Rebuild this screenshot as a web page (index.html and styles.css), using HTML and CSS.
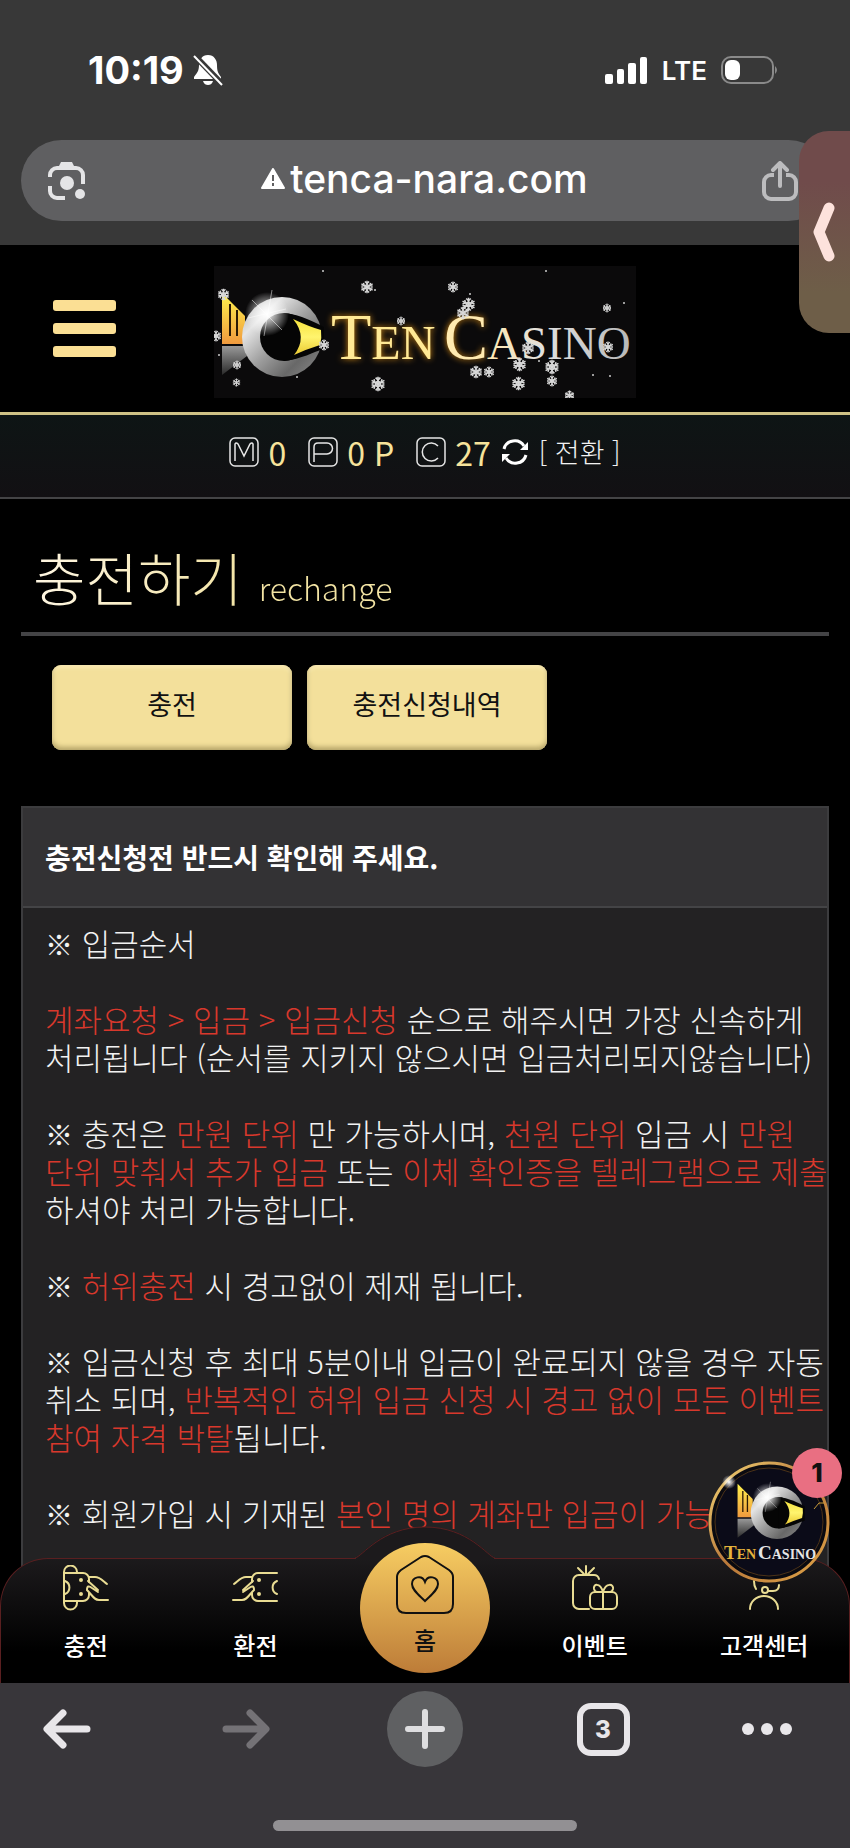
FILE: index.html
```html
<!DOCTYPE html>
<html lang="ko">
<head>
    <meta charset="UTF-8">
    <meta name="viewport" content="width=device-width, initial-scale=1.0">
    <title>충전하기 - TEN CASINO</title>
    <link rel="stylesheet" href="styles.css">
</head>
<body>
    <!-- shared drawings -->
    <svg class="defs" width="0" height="0" aria-hidden="true">
        <defs>
            <linearGradient id="silver" x1="0" y1="0" x2="1" y2="1">
                <stop offset="0" stop-color="#aaa"/>
                <stop offset="0.25" stop-color="#e4e4e4"/>
                <stop offset="0.5" stop-color="#a0a0a0"/>
                <stop offset="0.75" stop-color="#686868"/>
                <stop offset="1" stop-color="#8c8c8c"/>
            </linearGradient>
            <linearGradient id="gold" x1="0" y1="0" x2="0" y2="1">
                <stop offset="0" stop-color="#fff34d"/>
                <stop offset="1" stop-color="#f09a3e"/>
            </linearGradient>
            <linearGradient id="ring" x1="0" y1="0" x2="1" y2="1">
                <stop offset="0" stop-color="#f4d676"/>
                <stop offset="0.5" stop-color="#b9783a"/>
                <stop offset="1" stop-color="#e0a548"/>
            </linearGradient>
            <linearGradient id="eye" x1="0" y1="0" x2="0" y2="1">
                <stop offset="0" stop-color="#f5e23c"/>
                <stop offset="0.5" stop-color="#fff46e"/>
                <stop offset="1" stop-color="#eac932"/>
            </linearGradient>
            <linearGradient id="steel" x1="0" y1="0" x2="0" y2="1">
                <stop offset="0" stop-color="#999"/>
                <stop offset="1" stop-color="#2a2a2a"/>
            </linearGradient>
            <radialGradient id="shine">
                <stop offset="0" stop-color="#fff"/>
                <stop offset="0.3" stop-color="#fff" stop-opacity="0.7"/>
                <stop offset="1" stop-color="#fff" stop-opacity="0"/>
            </radialGradient>
            <linearGradient id="word" x1="0" y1="0" x2="1" y2="0">
                <stop offset="0" stop-color="#ffe9b0"/>
                <stop offset="0.4" stop-color="#e0e0e0"/>
                <stop offset="1" stop-color="#b8b8b8"/>
            </linearGradient>
            <symbol id="flake" viewBox="0 0 20 20">
                <g stroke="#d8d8d8" stroke-width="2" fill="none">
                    <path d="M10 1v18M2 5.500l16 9M18 5.500l-16 9"/>
                    <path d="M7 2l3 3 3-3M7 18l3-3 3 3M2 9l4-1-1-4M18 9l-4-1 1-4M2 11l4 1-1 4M18 11l-4 1 1 4"/>
                    <circle cx="10" cy="10" r="3"/>
                </g>
            </symbol>
            <symbol id="emblem" viewBox="0 0 110 120">
                <path d="M8 27L31 50V78H8z" fill="url(#gold)"/>
                <path d="M16 38v32M23 44v26" stroke="#2b1a05" stroke-width="2"/>
                <path d="M8 80h23l2 10L8 109z" fill="url(#steel)"/>
                <circle cx="68" cy="71" r="40" fill="url(#silver)"/>
                <circle cx="70" cy="71" r="24" fill="#050505"/>
                <path d="M70 47C88 49 100 56 110 61v22C99 86 88 93 70 95z" fill="#050505"/>
                <path d="M79 53Q96 61 107 64Q108 72 106 79Q93 83 80 89Q94 71 79 53z" fill="url(#eye)"/>
                <circle cx="53" cy="48" r="22" fill="url(#shine)"/>
                <path d="M38 34L68 64M58 24L50 70M34 52L72 43" stroke="#fff" stroke-opacity="0.5"/>
            </symbol>
        </defs>
    </svg>

    <header class="browser-top">
        <div class="status-bar">
            <div class="status-left">
                <span class="time">10:19</span>
                <svg width="30" height="32" viewBox="0 0 30 32" fill="#fff">
                    <path d="M15 1C9 1 6 6 6 11C6 17 4 19 1 23V25H28V23C25 19 24 17 24 11C24 6 21 1 15 1z"/>
                    <path d="M10 27h10c-1 3-3 4-5 4s-4-1-5-4z"/>
                    <path d="M1 1L30 31" stroke="#383838" stroke-width="6"/>
                    <path d="M1 2L29 31" stroke="#fff" stroke-width="2"/>
                </svg>
            </div>
            <div class="status-right">
                <svg width="43" height="27" viewBox="0 0 43 27" fill="#fff">
                    <rect x="0" y="17" width="8" height="10" rx="2"/>
                    <rect x="12" y="12" width="7" height="15" rx="2"/>
                    <rect x="23" y="6" width="8" height="21" rx="2"/>
                    <rect x="35" y="0" width="7" height="27" rx="2"/>
                </svg>
                <span class="network">LTE</span>
                <svg width="58" height="28" viewBox="0 0 58 28">
                    <rect x="1" y="1" width="51" height="26" rx="9" fill="none" stroke="#8a8a8a" stroke-width="2"/>
                    <rect x="4" y="4" width="15" height="20" rx="6" fill="#fff"/>
                    <path d="M54 10q4 4 0 8z" fill="#8a8a8a"/>
                </svg>
            </div>
        </div>
        <div class="url-bar">
            <button class="url-btn" type="button" aria-label="렌즈">
                <svg width="40" height="40" viewBox="0 0 40 40" fill="none" stroke="#e4e4e6" stroke-width="4">
                    <path d="M3 16v-2a7 7 0 0 1 7-7h19a7 7 0 0 1 7 7v9M3 25v5a7 7 0 0 0 7 7h8"/>
                    <path d="M11 7l3-6h11l3 6z" fill="#e4e4e6" stroke="none"/>
                    <circle cx="20" cy="22" r="7" fill="#e4e4e6" stroke="none"/>
                    <circle cx="33" cy="33" r="5" fill="#e4e4e6" stroke="none"/>
                </svg>
            </button>
            <div class="url-text">
                <svg width="24" height="21" viewBox="0 0 24 21">
                    <path d="M12 1L23 20H1z" fill="#fff" stroke="#fff" stroke-width="2" stroke-linejoin="round"/>
                    <path d="M12 7v6M12 15v3" stroke="#5f5f61" stroke-width="2"/>
                </svg>
                <span>tenca-nara.com</span>
            </div>
            <button class="url-btn" type="button" aria-label="공유">
                <svg width="36" height="40" viewBox="0 0 36 40" fill="none" stroke="#bcbcbe" stroke-width="4" stroke-linecap="round" stroke-linejoin="round">
                    <path d="M12 14H9a7 7 0 0 0-7 7v10a7 7 0 0 0 7 7h18a7 7 0 0 0 7-7V21a7 7 0 0 0-7-7h-3" stroke-linecap="butt"/>
                    <path d="M18 25V3M11 9l7-7 7 7"/>
                </svg>
            </button>
        </div>
    </header>

    <main class="site">
        <div class="site-header">
            <button class="menu-btn" type="button" aria-label="메뉴">
                <span></span><span></span><span></span>
            </button>
            <a class="logo" href="#" aria-label="TEN CASINO">
                <svg width="422" height="132" viewBox="0 0 422 132">
                    <rect width="422" height="132" fill="#0b0a0b"/>
                    <use href="#emblem" x="0" y="0" width="110" height="120"/>
                    <g font-family="Liberation Serif, serif">
                        <text class="glow" x="117" y="93" font-size="66" fill="#ffe995">T<tspan font-size="48">EN</tspan></text>
                        <text class="glow" x="230" y="93" font-size="66" fill="#ffeab0">C</text>
                        <text x="273" y="93" font-size="47" fill="url(#word)">ASINO</text>
                    </g>
                    <g>
                        <use href="#flake" x="146" y="14" width="14" height="14"/>
                        <use href="#flake" x="3" y="22" width="13" height="13"/>
                        <use href="#flake" x="-4" y="64" width="12" height="12"/>
                        <use href="#flake" x="18" y="94" width="10" height="10"/>
                        <use href="#flake" x="18" y="112" width="9" height="9"/>
                        <use href="#flake" x="156" y="110" width="16" height="16"/>
                        <use href="#flake" x="182" y="50" width="10" height="10"/>
                        <use href="#flake" x="104" y="73" width="12" height="12"/>
                        <use href="#flake" x="233" y="15" width="12" height="12"/>
                        <use href="#flake" x="247" y="31" width="15" height="15"/>
                        <use href="#flake" x="242" y="40" width="14" height="14"/>
                        <use href="#flake" x="388" y="37" width="10" height="10"/>
                        <use href="#flake" x="388" y="75" width="12" height="12"/>
                        <use href="#flake" x="307" y="75" width="14" height="14"/>
                        <use href="#flake" x="298" y="91" width="15" height="15"/>
                        <use href="#flake" x="255" y="99" width="14" height="14"/>
                        <use href="#flake" x="269" y="100" width="12" height="12"/>
                        <use href="#flake" x="297" y="110" width="15" height="15"/>
                        <use href="#flake" x="330" y="93" width="16" height="16"/>
                        <use href="#flake" x="332" y="109" width="12" height="12"/>
                        <use href="#flake" x="350" y="124" width="11" height="11"/>
                    </g>
                    <g fill="#ccc">
                        <circle cx="109" cy="5" r="1"/><circle cx="161" cy="24" r="1"/>
                        <circle cx="5" cy="89" r="1"/><circle cx="83" cy="111" r="1"/>
                        <circle cx="332" cy="5" r="1"/><circle cx="256" cy="28" r="1"/>
                        <circle cx="410" cy="37" r="1"/><circle cx="396" cy="110" r="1"/>
                        <circle cx="379" cy="109" r="1"/><circle cx="325" cy="95" r="1"/>
                    </g>
                </svg>
            </a>
        </div>

        <div class="balance-bar">
            <div class="balance">
                <svg width="30" height="30" viewBox="0 0 30 30" fill="none" stroke="#e6e6e6" stroke-width="1.500">
                    <rect x="1" y="1" width="28" height="28" rx="5"/>
                    <path d="M6 24V7q1-2 3 0l6 12 6-12q2-2 3 0V24"/>
                </svg>
                <span>0</span>
            </div>
            <div class="balance">
                <svg width="30" height="30" viewBox="0 0 30 30" fill="none" stroke="#e6e6e6" stroke-width="1.500">
                    <rect x="1" y="1" width="28" height="28" rx="5"/>
                    <path d="M6 25V10q0-4 4-4h9a5 5 0 0 1 0 11H6"/>
                </svg>
                <span>0 P</span>
            </div>
            <div class="balance">
                <svg width="30" height="30" viewBox="0 0 30 30" fill="none" stroke="#e6e6e6" stroke-width="1.500">
                    <rect x="1" y="1" width="28" height="28" rx="5"/>
                    <path d="M22 9a9 9 0 1 0 0 12"/>
                </svg>
                <span>27</span>
            </div>
            <button class="convert-btn" type="button">
                <svg width="28" height="28" viewBox="0 0 28 28" fill="none" stroke="#fff" stroke-width="3">
                    <path d="M3 11A11 11 0 0 1 23 8M25 17A11 11 0 0 1 5 20"/>
                    <path d="M27 4v8h-8zM1 24v-8h8z" fill="#fff" stroke="none"/>
                </svg>
                <span>[ 전환 ]</span>
            </button>
        </div>

        <div class="content">
            <h1 class="page-title">충전하기 <small>rechange</small></h1>

            <div class="tabs">
                <button class="tab" type="button">충전</button>
                <button class="tab" type="button">충전신청내역</button>
            </div>

            <section class="notice">
                <h2>충전신청전 반드시 확인해 주세요.</h2>
                <div class="notice-body">
                    <p><i>※</i> 입금순서</p>
                    <p><em>계좌요청 &gt; 입금 &gt; 입금신청</em> 순으로 해주시면 가장 신속하게<br>
                    처리됩니다 (순서를 지키지 않으시면 입금처리되지않습니다)</p>
                    <p><i>※</i> 충전은 <em>만원 단위</em> 만 가능하시며, <em>천원 단위</em> 입금 시 <em>만원<br>
                    단위 맞춰서 추가 입금</em> 또는 <em>이체 확인증을 텔레그램으로 제출</em><br>
                    하셔야 처리 가능합니다.</p>
                    <p><i>※</i> <em>허위충전</em> 시 경고없이 제재 됩니다.</p>
                    <p><i>※</i> 입금신청 후 최대 5분이내 입금이 완료되지 않을 경우 자동<br>
                    취소 되며, <em>반복적인 허위 입금 신청 시 경고 없이 모든 이벤트<br>
                    참여 자격 박탈</em>됩니다.</p>
                    <p><i>※</i> 회원가입 시 기재된 <em>본인 명의 계좌만 입금이 가능</em></p>
                </div>
            </section>
        </div>

        <nav class="site-nav">
            <svg class="nav-bump" width="140" height="33" viewBox="0 0 140 33">
                <path d="M1 32C8 28 26 1 70 1S132 28 139 32V33H1z" fill="#1c1a1c"/>
                <path d="M0 32C7 31 26 1 70 1S133 31 140 32" fill="none" stroke="#5a1f20"/>
            </svg>
            <a href="#">
                <svg width="46" height="46" viewBox="0 0 46 46" fill="none" stroke="#e9dc93" stroke-width="2" stroke-linecap="round">
                    <path d="M14 8V7a6 6 0 0 0-13 0v31a6 6 0 0 0 13 0v-1"/>
                    <path d="M1 8h19a6 6 0 0 1 6 6v3M26 28v2a6 6 0 0 1-6 6H1M2 16a7 7 0 0 1 0 13"/>
                    <path d="M26 12h6c5 0 8 4 12 7M25 16l10 9M45 35h-9c-5 0-6-4-12-10q0-6 5-2l6 4"/>
                    <circle cx="18" cy="15" r="1"/><circle cx="18" cy="29" r="1"/>
                </svg>
                <span>충전</span>
            </a>
            <a href="#">
                <svg width="46" height="46" viewBox="0 0 46 46" fill="none" stroke="#e9dc93" stroke-width="2" stroke-linecap="round">
                    <path d="M45 8H26a6 6 0 0 0-6 6v3M45 36H26a6 6 0 0 1-6-6v-2M45 16a7 7 0 0 0 0 13"/>
                    <path d="M20 12h-6c-5 0-8 4-12 7M21 16l-10 9M1 35h9c5 0 6-4 12-10q0-6-5-2l-6 4"/>
                    <circle cx="27" cy="15" r="1"/><circle cx="27" cy="29" r="1"/>
                </svg>
                <span>환전</span>
            </a>
            <a class="home" href="#">
                <svg width="60" height="62" viewBox="0 0 60 62" fill="none" stroke="#111" stroke-width="2">
                    <path d="M26 3q4-2 8 0l20 13q4 3 4 7v27q0 9-9 9H11q-9 0-9-9V23q0-4 4-7z"/>
                    <path d="M30 47C24 41 17 36 17 30C17 23 27 20 30 28C33 20 43 23 43 30C43 36 36 41 30 47z"/>
                </svg>
                <span>홈</span>
            </a>
            <a href="#">
                <svg width="46" height="46" viewBox="0 0 46 46" fill="none" stroke="#e9dc93" stroke-width="2" stroke-linecap="round">
                    <path d="M17 44H7a6 6 0 0 1-6-6V16a6 6 0 0 1 6-6h15q4 0 5 4M14 9V1M12 9L6 3M16 9l6-6"/>
                    <rect x="18" y="27" width="27" height="17" rx="5"/>
                    <path d="M31 27v17M31 27c-3-10-10-8-9-3q1 3 3 3M31 27c3-10 11-8 10-3q-1 3-3 3"/>
                </svg>
                <span>이벤트</span>
            </a>
            <a href="#">
                <svg width="46" height="46" viewBox="0 0 46 46" fill="none" stroke="#e9dc93" stroke-width="2" stroke-linecap="round">
                    <path d="M13 16q0 5 2 8M38 20q0 6-6 6h-5"/>
                    <circle cx="24" cy="25" r="3"/>
                    <path d="M9 44a14 13 0 0 1 28 0"/>
                </svg>
                <span>고객센터</span>
            </a>
        </nav>

        <button class="chat" type="button" aria-label="상담">
            <svg width="122" height="122" viewBox="0 0 122 122">
                <circle cx="61" cy="61" r="59" fill="#0a0a10" stroke="url(#ring)" stroke-width="3"/>
                <circle cx="61" cy="61" r="54" fill="#0b0b18" stroke="#4b3218"/>
                <use href="#emblem" x="24" y="5" width="73" height="79"/>
                <g font-family="Liberation Serif, serif" font-size="19" font-weight="bold">
                    <text x="16" y="98" fill="#e3b23c">T<tspan font-size="14">EN</tspan></text>
                    <text x="50" y="98" fill="#e6e6e6">C<tspan font-size="14">ASINO</tspan></text>
                </g>
                <circle cx="21" cy="21" r="7" fill="url(#shine)"/>
                <path d="M106 48l5-6h6" fill="none" stroke="#c79a3a"/>
            </svg>
            <span class="badge">1</span>
        </button>
    </main>

    <button class="side-handle" type="button" aria-label="열기">
        <svg width="22" height="60" viewBox="0 0 22 60" fill="none" stroke="#fde2dc" stroke-width="11" stroke-linecap="round" stroke-linejoin="round">
            <path d="M16 6L6 30L16 54"/>
        </svg>
    </button>

    <footer class="browser-bottom">
        <div class="toolbar">
            <button type="button" aria-label="뒤로">
                <svg width="48" height="40" viewBox="0 0 48 40" fill="none" stroke="#e8e6e9" stroke-width="7" stroke-linecap="round" stroke-linejoin="round">
                    <path d="M44 20H5M20 4L4 20l16 16"/>
                </svg>
            </button>
            <button type="button" aria-label="앞으로">
                <svg width="48" height="40" viewBox="0 0 48 40" fill="none" stroke="#747276" stroke-width="7" stroke-linecap="round" stroke-linejoin="round">
                    <path d="M4 20h39M28 4l16 16-16 16"/>
                </svg>
            </button>
            <button class="new-tab" type="button" aria-label="새 탭">
                <svg width="40" height="40" viewBox="0 0 40 40" stroke="#dedee0" stroke-width="6" stroke-linecap="round">
                    <path d="M20 3v34M3 20h34"/>
                </svg>
            </button>
            <button class="tab-count" type="button">3</button>
            <button type="button" aria-label="더보기">
                <svg width="50" height="12" viewBox="0 0 50 12" fill="#e8e6e9">
                    <circle cx="6" cy="6" r="6"/><circle cx="25" cy="6" r="6"/><circle cx="44" cy="6" r="6"/>
                </svg>
            </button>
        </div>
        <div class="home-indicator"></div>
    </footer>
</body>
</html>
```
FILE: styles.css
```css
:root {
    --chrome: #383838;
    --gold: #f6e39b;
    --line: #444446;
    --red: #d8382c;
    --kr: "Noto Sans CJK KR", sans-serif;
    --ui: Inter, "Noto Sans CJK KR", sans-serif;
}

* {
    box-sizing: border-box;
}

body {
    margin: 0;
    height: 100vh;
    display: flex;
    flex-direction: column;
    overflow: hidden;
    background-color: #000;
    color: #f2f2f2;
    font-family: var(--kr);
}

button {
    padding: 0;
    border: none;
    background: none;
    font-family: inherit;
    color: inherit;
    cursor: pointer;
}

svg {
    display: block;
    flex-shrink: 0;
}

.defs {
    position: absolute;
}

/* browser top */
.browser-top {
    background-color: var(--chrome);
    padding: 48px 21px 24px;
    font-family: var(--ui);
    color: #fff;
}

.status-bar {
    display: flex;
    justify-content: space-between;
    align-items: center;
    height: 44px;
    padding: 0 50px 0 67px;
    margin-bottom: 48px;
}

.status-left {
    display: flex;
    align-items: center;
    gap: 9px;
}

.status-right {
    display: flex;
    align-items: center;
    gap: 14px;
}

.time {
    font-size: 38px;
    font-weight: 700;
    line-height: 40px;
}

.network {
    font-size: 26px;
    font-weight: 600;
}

.url-bar {
    display: flex;
    justify-content: space-between;
    align-items: center;
    height: 81px;
    padding: 0 31px 0 26px;
    border-radius: 41px;
    background-color: #5f5f61;
}

.url-text {
    display: flex;
    align-items: center;
    gap: 5px;
    padding-bottom: 4px;
    font-size: 39px;
    font-weight: 500;
}

/* site */
.site {
    position: relative;
    flex: 1;
    min-height: 0;
    overflow: hidden;
}

.site-header {
    position: relative;
    display: flex;
    justify-content: center;
    align-items: center;
    height: 170px;
    border-bottom: 3px solid #cfc286;
}

.menu-btn {
    position: absolute;
    left: 53px;
    display: flex;
    flex-direction: column;
    gap: 12px;
}

.menu-btn span {
    width: 63px;
    height: 11px;
    border-radius: 3px;
    background-color: #fbdf94;
}

.logo {
    margin-top: 6px;
}

.glow {
    filter: drop-shadow(0 0 3px #d98d14);
}

.balance-bar {
    display: flex;
    justify-content: center;
    align-items: center;
    gap: 22px;
    height: 84px;
    padding-bottom: 8px;
    border-bottom: 2px solid var(--line);
    background: linear-gradient(#0e1515, #121013);
}

.balance {
    display: flex;
    align-items: center;
    gap: 9px;
    font-size: 32px;
    font-weight: 400;
    line-height: 40px;
    color: var(--gold);
}

.convert-btn {
    display: flex;
    align-items: center;
    gap: 10px;
    margin-left: -12px;
    font-size: 27px;
    font-weight: 300;
    line-height: 40px;
}

.content {
    padding: 0 21px;
}

.page-title {
    margin: 0;
    padding: 38px 0 5px 12px;
    border-bottom: 4px solid var(--line);
    font-size: 57px;
    font-weight: 300;
    line-height: 79px;
    color: transparent;
    background: linear-gradient(90deg, #fff7e6, #f3e4a4 28%);
    -webkit-background-clip: text;
    background-clip: text;
}

.page-title small {
    font-size: 32px;
}

.tabs {
    display: flex;
    gap: 15px;
    padding: 29px 31px 56px;
}

.tab {
    width: 240px;
    height: 85px;
    padding-bottom: 8px;
    border-radius: 9px;
    background-color: #f3e09b;
    box-shadow: inset 0 -3px 5px #b5a468, inset 0 2px 4px #fff0be;
    font-size: 27px;
    color: #111;
}

.notice {
    border: 2px solid #3c3c3e;
    background-color: #232223;
}

.notice h2 {
    margin: 0;
    padding: 0 22px;
    border-bottom: 2px solid var(--line);
    background-color: #333234;
    font-size: 28px;
    font-weight: 700;
    line-height: 98px;
    color: #fff;
}

.notice-body {
    padding: 16px 0 0 22px;
    font-size: 31px;
    font-weight: 300;
    line-height: 38px;
    white-space: nowrap;
}

.notice-body p {
    margin: 0 0 38px;
}

.notice-body em {
    font-style: normal;
    color: var(--red);
}

.notice-body i {
    font-size: 28px;
    font-style: normal;
    line-height: 1;
}

/* bottom navigation of the site */
.site-nav {
    position: absolute;
    left: 0;
    right: 0;
    bottom: 0;
    display: grid;
    grid-template-columns: repeat(5, 1fr);
    height: 125px;
    border: 1px solid #5a1f20;
    border-bottom: none;
    border-radius: 48px 48px 0 0;
    background: linear-gradient(#1c1a1c, #000 75%);
}

.nav-bump {
    position: absolute;
    left: 50%;
    top: -33px;
    margin-left: -70px;
}

.site-nav a {
    display: flex;
    flex-direction: column;
    align-items: center;
    gap: 18px;
    padding-top: 6px;
    font-size: 24px;
    font-weight: 500;
    line-height: 32px;
    color: #fff;
    text-decoration: none;
}

.site-nav .home {
    position: relative;
    justify-self: center;
    width: 130px;
    height: 130px;
    margin-top: -16px;
    padding-top: 11px;
    gap: 8px;
    border-radius: 50%;
    background: linear-gradient(#f7cd62, #bd7c38);
    color: #111;
}

.chat {
    position: absolute;
    right: 20px;
    bottom: 100px;
}

.badge {
    position: absolute;
    top: -13px;
    right: -12px;
    width: 50px;
    height: 50px;
    border-radius: 50%;
    background-color: #e96f82;
    font-family: var(--ui);
    font-size: 26px;
    font-weight: 800;
    line-height: 50px;
    color: #111;
}

.side-handle {
    position: absolute;
    top: 131px;
    right: 0;
    width: 51px;
    height: 202px;
    padding-left: 14px;
    border-radius: 30px 0 0 30px;
    background: linear-gradient(#704b4b 25%, #6e5e48 80%);
}

/* browser bottom */
.browser-bottom {
    height: 165px;
    background-color: #38363a;
}

.toolbar {
    display: grid;
    grid-template-columns: 134fr 224fr 134fr 222fr 106fr;
    align-items: center;
    justify-items: center;
    height: 92px;
    padding-right: 30px;
}

.new-tab {
    display: flex;
    justify-content: center;
    align-items: center;
    width: 76px;
    height: 76px;
    border-radius: 50%;
    background-color: #5f6062;
}

.tab-count {
    width: 53px;
    height: 53px;
    border: 6px solid #e8e6e9;
    border-radius: 14px;
    font-family: var(--ui);
    font-size: 24px;
    font-weight: 800;
    color: #e8e6e9;
}

.home-indicator {
    width: 304px;
    height: 11px;
    margin: 45px auto 0;
    border-radius: 6px;
    background-color: #929093;
}
```
